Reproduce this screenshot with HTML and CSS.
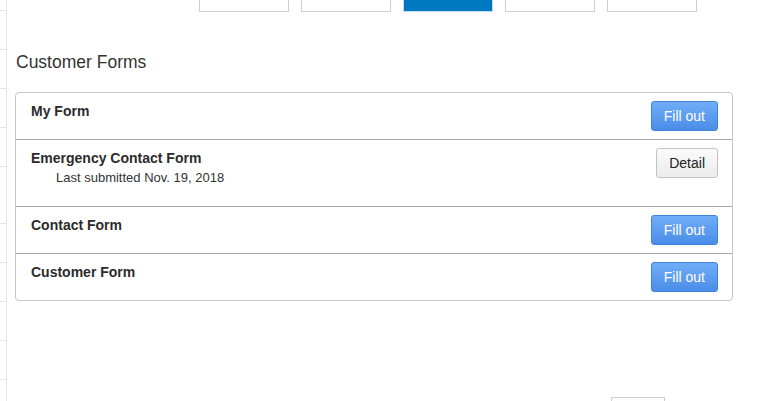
FILE: index.html
```html
<!DOCTYPE html>
<html lang="en">
<head>
<meta charset="utf-8">
<title>Customer Forms</title>
<link rel="stylesheet" href="styles.css">
</head>
<body>
<div class="side">
  <div class="cell first"></div>
  <div class="cell"></div>
  <div class="cell"></div>
  <div class="cell"></div>
  <div class="cell"></div>
  <div class="cell tall"></div>
  <div class="cell"></div>
  <div class="cell"></div>
  <div class="cell"></div>
  <div class="cell"></div>
</div>
<main class="main">
  <nav class="tabs">
    <span class="tab"></span>
    <span class="tab"></span>
    <span class="tab active"></span>
    <span class="tab"></span>
    <span class="tab"></span>
  </nav>
  <h1 class="title">Customer Forms</h1>
  <div class="panel">
    <div class="row">
      <div class="info"><div class="name">My Form</div></div>
      <button class="btn primary">Fill out</button>
    </div>
    <div class="row">
      <div class="info">
        <div class="name">Emergency Contact Form</div>
        <div class="sub">Last submitted Nov. 19, 2018</div>
      </div>
      <button class="btn">Detail</button>
    </div>
    <div class="row">
      <div class="info"><div class="name">Contact Form</div></div>
      <button class="btn primary">Fill out</button>
    </div>
    <div class="row">
      <div class="info"><div class="name">Customer Form</div></div>
      <button class="btn primary">Fill out</button>
    </div>
  </div>
  <div class="pager"></div>
</main>
</body>
</html>
```

FILE: styles.css
```css
html, body {
  margin: 0;
  padding: 0;
  background: #fff;
}
body {
  display: flex;
  height: 401px;
  overflow: hidden;
  font-family: "Liberation Sans", Arial, sans-serif;
  color: #333;
}
.side {
  width: 6px;
  flex: none;
  border-right: 1px solid #e3e3ea;
  display: flex;
  flex-direction: column;
}
.cell {
  height: 38px;
  flex: none;
  border-bottom: 1px solid #e3e3ea;
}
.cell.first { height: 10px; }
.cell.tall { height: 56px; }
.main {
  flex: 1;
  padding-left: 8px;
  display: flex;
  flex-direction: column;
}
.tabs {
  display: flex;
  gap: 12px;
  margin-left: 184px;
}
.tab {
  box-sizing: border-box;
  width: 90px;
  height: 12px;
  border: 1px solid #cfcfcf;
  border-top: none;
  background: #fff;
}
.tab.active {
  background: #0079c2;
  border-color: #c6dcef;
}
.title {
  margin: 38px 0 0 1px;
  font-size: 17.5px;
  line-height: 24px;
  font-weight: normal;
  color: #333;
}
.panel {
  margin-top: 18px;
  width: 718px;
  box-sizing: border-box;
  border: 1px solid #c6c6c6;
  border-radius: 4px;
}
.row {
  display: flex;
  justify-content: space-between;
  align-items: flex-start;
  padding: 8px 14px 8px 15px;
}
.row + .row {
  border-top: 1px solid #a9a9a9;
}
.name {
  font-size: 14px;
  font-weight: bold;
  line-height: 20px;
  color: #2b2b2b;
}
.sub {
  font-size: 13px;
  line-height: 20px;
  padding-left: 25px;
  margin-bottom: 10px;
  color: #333;
}
.btn {
  box-sizing: border-box;
  height: 30px;
  padding: 0 12px;
  font-family: "Liberation Sans", Arial, sans-serif;
  font-size: 14px;
  color: #222;
  background: linear-gradient(#fbfbfb, #ececec);
  border: 1px solid #c3c3c3;
  border-radius: 3px;
}
.btn.primary {
  color: #fff;
  background: linear-gradient(#71adf7, #4a8de8);
  border-color: #3f84df;
}
.pager {
  margin: 96px 0 0 596px;
  width: 54px;
  height: 20px;
  box-sizing: border-box;
  border: 1px solid #cfcfcf;
  border-bottom: none;
}
```
